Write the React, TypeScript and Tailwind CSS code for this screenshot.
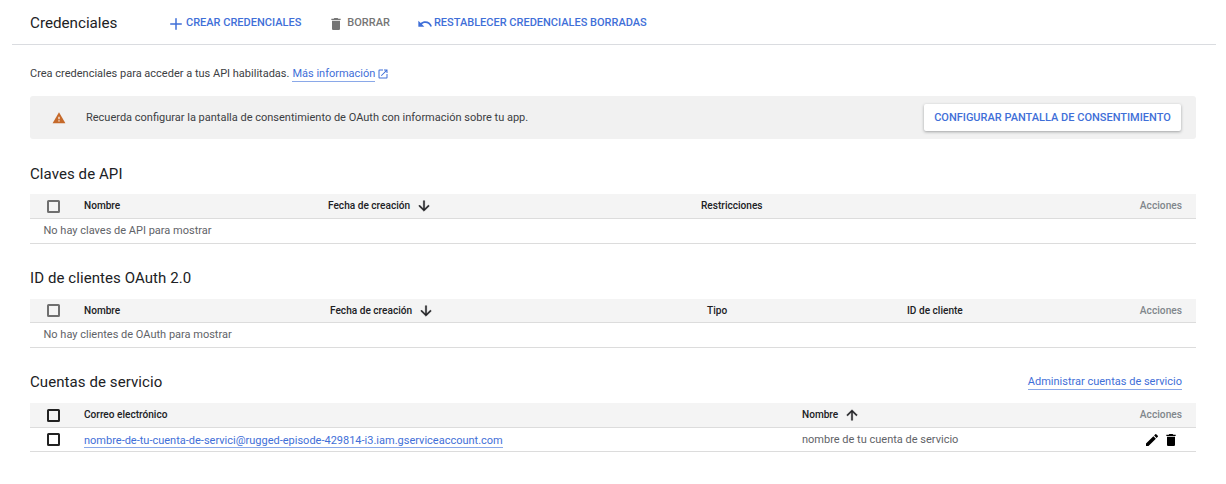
import { Plus } from "lucide-react";

const BLUE = "text-[#3f6fd8]";

function TrashIcon({ className }: { className?: string }) {
  return (
    <svg viewBox="0 0 24 24" fill="currentColor" className={className}>
      <path d="M6 19c0 1.1.9 2 2 2h8c1.1 0 2-.9 2-2V7H6v12zM19 4h-3.5l-1-1h-5l-1 1H5v2h14V4z" />
    </svg>
  );
}

function PencilIcon({ className }: { className?: string }) {
  return (
    <svg viewBox="0 0 24 24" fill="currentColor" className={className}>
      <path d="M3 17.25V21h3.75L17.81 9.94l-3.75-3.75L3 17.25zM20.71 7.04a1 1 0 0 0 0-1.41l-2.34-2.34a1 1 0 0 0-1.41 0l-1.83 1.83 3.75 3.75 1.83-1.83z" />
    </svg>
  );
}

function UndoIcon({ className }: { className?: string }) {
  return (
    <svg viewBox="0 0 24 24" fill="currentColor" className={className}>
      <path d="M12.5 8c-2.65 0-5.05.99-6.9 2.6L2 7v9h9l-3.62-3.62c1.39-1.16 3.16-1.88 5.12-1.88 3.54 0 6.55 2.31 7.6 5.5l2.37-.78C21.08 11.03 17.15 8 12.5 8z" />
    </svg>
  );
}

function WarningIcon({ className }: { className?: string }) {
  return (
    <svg viewBox="0 0 24 24" className={className}>
      <path fill="#c5692a" d="M1 21h22L12 2 1 21z" />
      <path fill="#fff" d="M13 18h-2v-2h2v2zm0-4h-2v-4h2v4z" />
    </svg>
  );
}

function OpenInNewIcon({ className }: { className?: string }) {
  return (
    <svg viewBox="0 0 24 24" fill="currentColor" className={className}>
      <path d="M19 19H5V5h7V3H5a2 2 0 0 0-2 2v14a2 2 0 0 0 2 2h14c1.1 0 2-.9 2-2v-7h-2v7zM14 3v2h3.59l-9.83 9.83 1.41 1.41L19 6.41V10h2V3h-7z" />
    </svg>
  );
}

function SortArrow({ dir }: { dir: "up" | "down" }) {
  return (
    <svg
      viewBox="0 0 24 24"
      fill="currentColor"
      stroke="currentColor"
      strokeWidth="0.6"
      className={`w-4 h-4 ml-[6px] text-[#202124] ${dir === "up" ? "rotate-180" : ""}`}
    >
      <path d="M20 12l-1.41-1.41L13 16.17V4h-2v12.17l-5.58-5.59L4 12l8 8 8-8z" />
    </svg>
  );
}

function Checkbox({ dark }: { dark?: boolean }) {
  return (
    <span
      className={`block w-[13px] h-[13px] rounded-[1.5px] border-2 ${dark ? "border-[#222]" : "border-[#6f6f6f]"}`}
    />
  );
}

function HeaderCell({ label, width, sort }: { label: string; width?: string; sort?: "up" | "down" }) {
  return (
    <div className={`flex items-center ${width ?? ""}`}>
      <span className="text-[10.1px] font-medium text-[#202124]">{label}</span>
      {sort && <SortArrow dir={sort} />}
    </div>
  );
}

function HeaderRow({ children, dark, height }: { children: React.ReactNode; dark?: boolean; height: string }) {
  return (
    <div className={`flex items-center ${height} bg-[#f4f4f4] border-b border-[#dcdcdc] pr-[14px]`}>
      <div className="w-[54px] pl-[17px] shrink-0">
        <Checkbox dark={dark} />
      </div>
      {children}
      <span className="ml-auto text-[10.2px] font-medium text-[#80868b]">Acciones</span>
    </div>
  );
}

function EmptyRow({ text }: { text: string }) {
  return (
    <div className="flex items-center h-[25px] pl-[13.5px] pt-[1px] border-b border-[#dcdcdc] text-[11px] text-[#5f6368]">
      {text}
    </div>
  );
}

export default function App() {
  return (
    <div className="w-[1226px] h-[484px] bg-white font-['Roboto',sans-serif] overflow-hidden">
      <div className="mx-3 w-[1204px] h-[45px] flex items-center pl-[18px] pt-[3px] border-b border-[#dadce0]">
        <h1 className="w-[137px] text-[15.2px] text-[#202124]">Credenciales</h1>
        <div className={`flex items-center text-[11px] font-medium ${BLUE}`}>
          <Plus size={18} strokeWidth={2} className="mr-[1px]" />
          CREAR CREDENCIALES
        </div>
        <div className="flex items-center ml-[27px] text-[11px] font-medium text-[#757575]">
          <TrashIcon className="w-4 h-4 mr-[3px] text-[#757575]" />
          BORRAR
        </div>
        <div className={`flex items-center ml-[27px] text-[11px] font-medium ${BLUE}`}>
          <UndoIcon className="w-4 h-4 mr-[1px]" />
          RESTABLECER CREDENCIALES BORRADAS
        </div>
      </div>

      <div className="ml-[30px] w-[1166px]">
        <p className="mt-[21px] h-[16px] flex items-center text-[11px] text-[#3c4043]">
          Crea credenciales para acceder a tus API habilitadas.
          <a className={`ml-[3px] border-b border-[#8aa8e8] leading-[14px] ${BLUE}`}>Más información</a>
          <OpenInNewIcon className={`w-3 h-3 ml-[2px] ${BLUE}`} />
        </p>

        <div className="mt-[14px] h-[43px] flex items-center bg-[#f1f1f1] rounded-[3px] pl-[22px] pr-[15px]">
          <WarningIcon className="w-[14px] h-[14px] shrink-0" />
          <span className="ml-[20px] pt-[2px] text-[11px] text-[#3c4043]">
            Recuerda configurar la pantalla de consentimiento de OAuth con información sobre tu app.
          </span>
          <button className={`ml-auto h-[27px] w-[257px] pt-[1px] bg-white rounded-[2px] shadow-[0_1px_3px_rgba(60,64,67,0.45)] text-[11px] font-medium ${BLUE}`}>
            CONFIGURAR PANTALLA DE CONSENTIMIENTO
          </button>
        </div>

        <h2 className="mt-[25px] h-[18px] leading-[20px] text-[15px] tracking-[0.08px] text-[#202124]">Claves de API</h2>
        <div className="mt-[12px]">
          <HeaderRow height="h-[25px]">
            <HeaderCell label="Nombre" width="w-[244px]" />
            <HeaderCell label="Fecha de creación" width="w-[373px]" sort="down" />
            <HeaderCell label="Restricciones" />
          </HeaderRow>
          <EmptyRow text="No hay claves de API para mostrar" />
        </div>

        <h2 className="mt-[25px] h-[18px] leading-[18px] text-[15px] tracking-[0.08px] text-[#202124]">ID de clientes OAuth 2.0</h2>
        <div className="mt-[12px]">
          <HeaderRow height="h-6">
            <HeaderCell label="Nombre" width="w-[246px]" />
            <HeaderCell label="Fecha de creación" width="w-[377px]" sort="down" />
            <HeaderCell label="Tipo" width="w-[200px]" />
            <HeaderCell label="ID de cliente" />
          </HeaderRow>
          <EmptyRow text="No hay clientes de OAuth para mostrar" />
        </div>

        <div className="mt-[25px] h-[18px] flex items-center justify-between pr-[14px]">
          <h2 className="text-[15px] leading-[20px] tracking-[0.08px] text-[#202124]">Cuentas de servicio</h2>
          <a className={`text-[11px] mt-[1px] border-b border-[#8aa8e8] leading-[14px] ${BLUE}`}>Administrar cuentas de servicio</a>
        </div>
        <div className="mt-[12px]">
          <HeaderRow dark height="h-[25px]">
            <HeaderCell label="Correo electrónico" width="w-[718px]" />
            <HeaderCell label="Nombre" sort="up" />
          </HeaderRow>
          <div className="flex items-center h-6 border-b border-[#dcdcdc] pr-[17px]">
            <div className="w-[54px] pl-[17px] shrink-0">
              <Checkbox dark />
            </div>
            <div className="w-[718px] leading-[14px]">
              <a className={`text-[11px] border-b border-[#8aa8e8] ${BLUE}`}>
                nombre-de-tu-cuenta-de-servici@rugged-episode-429814-i3.iam.gserviceaccount.com
              </a>
            </div>
            <span className="pt-[1px] text-[11px] text-[#5f6368]">nombre de tu cuenta de servicio</span>
            <div className="ml-auto flex items-center gap-[3px] text-black">
              <PencilIcon className="w-4 h-4" />
              <TrashIcon className="w-4 h-4" />
            </div>
          </div>
        </div>
      </div>
    </div>
  );
}
